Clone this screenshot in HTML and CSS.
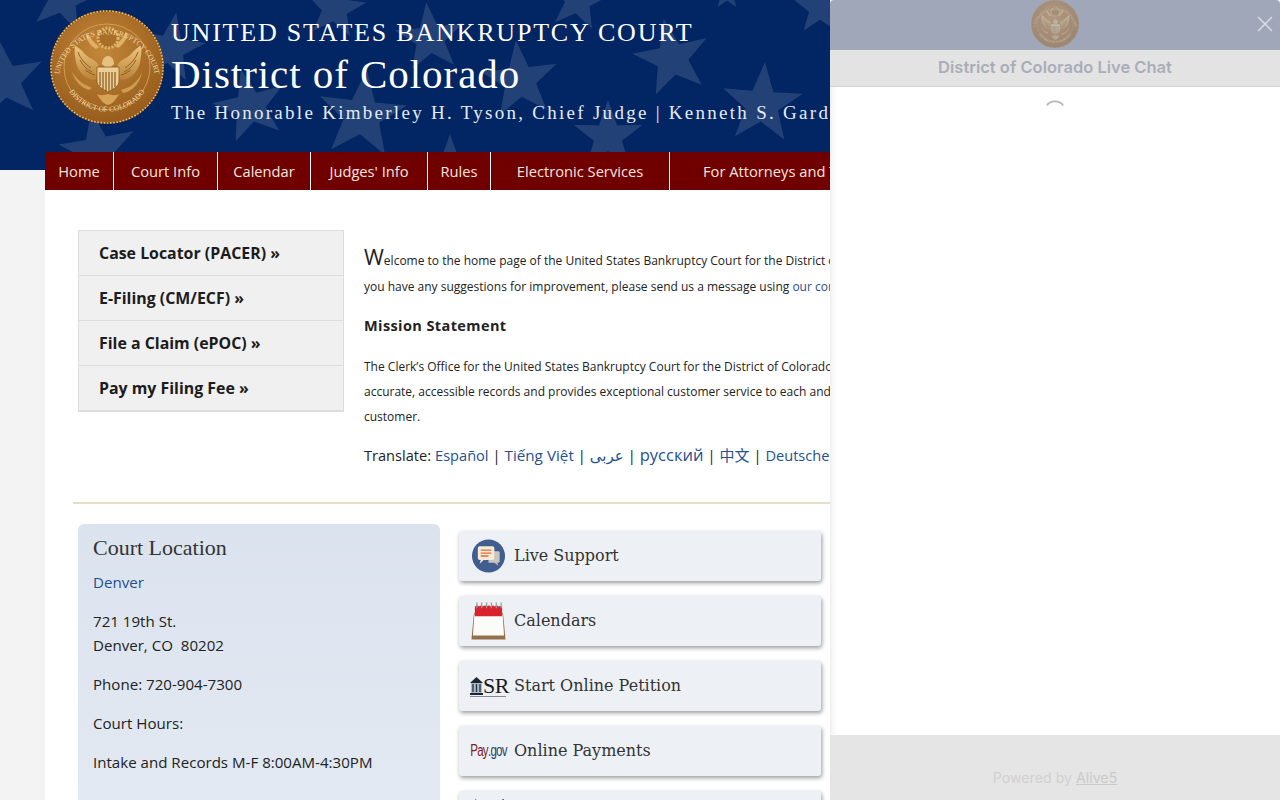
FILE: index.html
```html
<!DOCTYPE html>
<html lang="en">
<head>
    <meta charset="UTF-8">
    <meta name="viewport" content="width=device-width, initial-scale=1.0">
    <title>District of Colorado | United States Bankruptcy Court</title>
    <link rel="stylesheet" href="styles.css">
</head>
<body>

<header class="site-header">
    <svg class="stars" width="1280" height="170" viewBox="0 0 1280 170" aria-hidden="true">
        <defs>
            <polygon id="star" points="0,-1 .25,-.3 .951,-.309 .39,.13 .588,.809 0,.42 -.588,.809 -.39,.13 -.951,-.309 -.25,-.3"/>
        </defs>
        <use href="#star" transform="translate(63,-2) rotate(12) scale(36)"/>
        <use href="#star" transform="translate(4,80) rotate(-8) scale(42)"/>
        <use href="#star" transform="translate(98,150) rotate(-10) scale(40)"/>
        <use href="#star" transform="translate(170,48) rotate(10) scale(36)"/>
        <use href="#star" transform="translate(250,106) rotate(-14) scale(38)"/>
        <use href="#star" transform="translate(335,8) rotate(8) scale(32)"/>
        <use href="#star" transform="translate(362,115) rotate(6) scale(46)"/>
        <use href="#star" transform="translate(430,38) rotate(-6) scale(36)"/>
        <use href="#star" transform="translate(450,160) rotate(0) scale(26)"/>
        <use href="#star" transform="translate(520,80) rotate(-6) scale(40)"/>
        <use href="#star" transform="translate(578,0) rotate(10) scale(32)"/>
        <use href="#star" transform="translate(608,136) rotate(0) scale(36)"/>
        <use href="#star" transform="translate(672,58) rotate(-12) scale(40)"/>
        <use href="#star" transform="translate(762,104) rotate(4) scale(42)"/>
        <use href="#star" transform="translate(727,-6) rotate(0) scale(16)"/>
        <use href="#star" transform="translate(820,8) rotate(0) scale(28)"/>
    </svg>
    <svg class="seal" width="114" height="114" viewBox="0 0 114 114" role="img" aria-label="Court seal">
        <defs>
            <radialGradient id="gold" cx="45%" cy="35%" r="70%">
                <stop offset="0" stop-color="#c4873a"/>
                <stop offset="1" stop-color="#94591a"/>
            </radialGradient>
            <linearGradient id="wing" x1="0" y1="0" x2="0" y2="1">
                <stop offset="0" stop-color="#eec57e"/>
                <stop offset="1" stop-color="#b98338"/>
            </linearGradient>
            <g id="emblem">
                <circle cx="57" cy="57" r="56" fill="url(#gold)" stroke="#7c4c16" stroke-width="1.5"/>
                <circle cx="57" cy="57" r="56" fill="none" stroke="#eec272" stroke-width="1.6" stroke-dasharray="1.6 1.6"/>
                <circle cx="57" cy="57" r="43" fill="none" stroke="#dca855" stroke-width=".8"/>
                <circle cx="58" cy="28" r="10" fill="#a86f28" stroke="#e0b468" stroke-width="3" stroke-dasharray="2 1.4"/>
                <path d="M25 36c4 1 8 6 12 10 4 3 8 4 11 8l2 13c-4 4-9 3-13 1-5-3-10-9-11-16-1-5-2-11-1-16z" fill="url(#wing)"/>
                <path d="M91 36c-4 1-8 6-12 10-4 3-8 4-11 8l-2 13c4 4 9 3 13 1 5-3 10-9 11-16 1-5 2-11 1-16z" fill="url(#wing)"/>
                <path d="M28 42c2 6 7 12 13 16M30 50c3 5 6 9 12 12M35 60c3 2 6 4 10 5M88 42c-2 6-7 12-13 16M86 50c-3 5-6 9-12 12M81 60c-3 2-6 4-10 5" fill="none" stroke="#8a5618" stroke-width=".9"/>
                <path d="M38 24c2 4 6 8 11 13l-3 2c-5-3-9-8-10-13zM76 22c-2 4-6 9-11 14l3 2c5-3 9-9 10-14z" fill="#dfb066"/>
                <path d="M52 54c0-5 3-8 6-8s6 3 6 8l-3 3h-6z" fill="#e8c080"/>
                <path d="M47 57h22v14c0 5-5 8-11 11-6-3-11-6-11-11z" fill="#ecce94" stroke="#7e4f18" stroke-width=".7"/>
                <path d="M50 62v14M53 62v17M56 62v19M59 62v19M62 62v18M65 62v15" stroke="#7e4f18" stroke-width="1.1"/>
                <path d="M47 84c3 6 7 10 11 11 4-1 8-5 11-11-4 2-7 1-11 0-4 1-7 2-11 0z" fill="#d6a355"/>
                <path d="M22 62c3 4 7 10 14 13l6 3-3 2c-7-2-14-8-17-18zM92 62c-2 5-6 11-13 15l-8 3 2 3c9-1 17-10 19-21z" fill="#cf9c50"/>
                <text class="seal-text"><textPath href="#seal-top" startOffset="50%">UNITED STATES BANKRUPTCY COURT</textPath></text>
                <text class="seal-text"><textPath href="#seal-bottom" startOffset="50%">DISTRICT OF COLORADO</textPath></text>
            </g>
            <path id="seal-top" d="M9 66A48.500 48.500 0 0 1 105 66"/>
            <path id="seal-bottom" d="M14 72A46 46 0 0 0 100 72"/>
        </defs>
        <use href="#emblem"/>
    </svg>
    <div class="titles">
        <div class="title-top">UNITED STATES BANKRUPTCY COURT</div>
        <div class="title-main">District of Colorado</div>
        <div class="title-sub">The Honorable Kimberley H. Tyson, Chief Judge | Kenneth S. Gardner, Clerk of Court</div>
    </div>
</header>

<div class="page">
    <nav class="main-nav">
        <a href="#">Home</a>
        <a href="#">Court Info</a>
        <a href="#">Calendar</a>
        <a href="#">Judges' Info</a>
        <a href="#">Rules</a>
        <a href="#">Electronic Services</a>
        <a href="#">For Attorneys and Trustees</a>
    </nav>

    <section class="intro">
        <ul class="quick-links">
            <li><a href="#">Case Locator (PACER) »</a></li>
            <li><a href="#">E-Filing (CM/ECF) »</a></li>
            <li><a href="#">File a Claim (ePOC) »</a></li>
            <li><a href="#">Pay my Filing Fee »</a></li>
        </ul>
        <div class="welcome">
            <p class="lead"><span class="drop">W</span>elcome to the home page of the United States Bankruptcy Court for the District of Colorado. If<br>you have any suggestions for improvement, please send us a message using <a href="#">our contact form</a>.</p>
            <h3>Mission Statement</h3>
            <p class="mission">The Clerk’s Office for the United States Bankruptcy Court for the District of Colorado maintains<br>accurate, accessible records and provides exceptional customer service to each and every<br>customer.</p>
            <p class="translate">Translate: <a href="#">Español</a> | <a href="#" class="lang-vi">Tiếng Việt</a> | <a href="#" class="lang-ar" lang="ar">عربى</a> | <a href="#" class="lang-ru">русский</a> | <a href="#" class="lang-zh" lang="zh">中文</a> | <a href="#">Deutsche</a></p>
        </div>
    </section>

    <hr class="divider">

    <section class="lower">
        <div class="location">
            <h2>Court Location</h2>
            <p class="city"><a href="#">Denver</a></p>
            <p>721 19th St.<br>Denver, CO&nbsp; 80202</p>
            <p>Phone: 720-904-7300</p>
            <p>Court Hours:</p>
            <p>Intake and Records M-F 8:00AM-4:30PM</p>
        </div>
        <div class="tiles">
            <a href="#" class="tile">
                <span class="tile-icon">
                    <svg width="36" height="36" viewBox="0 0 36 36" aria-hidden="true">
                        <circle cx="18" cy="18" r="17" fill="#3f5d8e"/>
                        <path d="M18 13h10a1.500 1.500 0 0 1 1.500 1.500v9a1.500 1.500 0 0 1-1.500 1.500h-1l1 3-4-3h-6z" fill="#c9c4bc"/>
                        <path d="M9 8h13a2 2 0 0 1 2 2v10a2 2 0 0 1-2 2h-9l-4 4 1-4H9a2 2 0 0 1-2-2V10a2 2 0 0 1 2-2z" fill="#f6ead9"/>
                        <path d="M10 12h11M10 15h11M10 18h8" stroke="#e0703a" stroke-width="1.400"/>
                    </svg>
                </span>
                <span>Live Support</span>
            </a>
            <a href="#" class="tile">
                <span class="tile-icon">
                    <svg width="36" height="40" viewBox="0 0 36 40" aria-hidden="true">
                        <path d="M3 12h30l2.500 27H.500z" fill="#94704a"/>
                        <path d="M3.500 13h29l1.500 22H2z" fill="#fbfbf8"/>
                        <path d="M4 5q3-2 4 0 3-2 4 0 3-2 4 0 3-2 4 0 3-2 4 0 3-2 4 0 2-1 4 0v10H4z" fill="#d8222c"/>
                        <path d="M6 1v6M11 1v6M16 1v6M21 1v6M26 1v6M31 1v6" stroke="#9a9a9a" stroke-width="1.300"/>
                    </svg>
                </span>
                <span>Calendars</span>
            </a>
            <a href="#" class="tile">
                <span class="tile-icon sr-icon">
                    <svg width="13" height="19" viewBox="0 0 13 19" aria-hidden="true">
                        <path d="M6.500 0l6.500 6H0z" fill="#1c2530"/>
                        <rect x="1" y="6" width="11" height="10" fill="#a9bccb"/>
                        <path d="M3 7v8M6.500 7v8M10 7v8" stroke="#26323c" stroke-width="1.300"/>
                        <rect y="16" width="13" height="2" fill="#1c2530"/>
                    </svg>
                    <span class="sr-text">SR</span>
                </span>
                <span>Start Online Petition</span>
            </a>
            <a href="#" class="tile">
                <span class="tile-icon pay-icon"><span class="pay">Pay</span><span class="gov">.gov</span></span>
                <span>Online Payments</span>
            </a>
            <a href="#" class="tile tile-cut">
                <span class="tile-icon">
                    <svg width="36" height="6" viewBox="0 0 36 6" aria-hidden="true">
                        <path d="M3 6l2-4 2 4M32 6l1-5 1 5" fill="none" stroke="#444" stroke-width="1.200"/>
                    </svg>
                </span>
            </a>
        </div>
    </section>
</div>

<aside class="chat">
    <div class="chat-top">
        <svg class="chat-seal" width="48" height="48" viewBox="0 0 114 114" aria-hidden="true">
            <use href="#emblem"/>
        </svg>
        <svg class="chat-close" width="16" height="16" viewBox="0 0 16 16" aria-hidden="true">
            <path d="M1 1l14 14M15 1L1 15" stroke="#dfe2ea" stroke-width="1.200" fill="none"/>
        </svg>
    </div>
    <div class="chat-title">District of Colorado Live Chat</div>
    <div class="chat-body">
        <svg width="20" height="8" viewBox="0 0 20 8" aria-hidden="true">
            <path d="M2 6.500C5 1 15 1 18 6.500" stroke="#b3b6bf" stroke-width="1.800" fill="none"/>
        </svg>
    </div>
    <div class="chat-foot">Powered by <a href="#">Alive5</a></div>
</aside>

</body>
</html>
```

FILE: styles.css
```css
* {
    margin: 0;
    padding: 0;
    box-sizing: border-box;
}

html, body {
    height: 800px;
    overflow: hidden;
}

body {
    background-color: #f3f3f3;
    font-family: "Open Sans", sans-serif;
    color: #222;
}

a {
    color: #25508f;
    text-decoration: none;
}

.site-header {
    position: relative;
    display: flex;
    gap: 7px;
    height: 170px;
    padding: 10px 0 0 50px;
    background-color: #022563;
    overflow: hidden;
}

.stars {
    position: absolute;
    top: 0;
    left: 0;
    fill: #224277;
}

.seal {
    position: relative;
    flex: none;
}

.seal-text {
    font-family: "Liberation Serif", serif;
    font-size: 7.5px;
    fill: #f2d9a8;
    text-anchor: middle;
}

.titles {
    position: relative;
    font-family: "Liberation Serif", serif;
    color: #fff;
    white-space: nowrap;
}

.title-top {
    margin-top: 6px;
    font-size: 26px;
    line-height: 34px;
    letter-spacing: 1.8px;
}

.title-main {
    font-size: 41px;
    line-height: 48px;
    letter-spacing: .95px;
}

.title-sub {
    font-size: 19px;
    line-height: 28px;
    letter-spacing: 2.28px;
    margin-top: 1px;
    color: #e6ebf2;
}

.page {
    position: relative;
    margin: -18px 45px 0;
    padding-bottom: 40px;
    background-color: #fff;
    min-height: 700px;
}

.main-nav {
    display: grid;
    grid-template-columns: 69px 104px 93px 117px 63px 179px 1fr;
    height: 38px;
    background-color: #700000;
}

.main-nav a {
    color: #f4e6dc;
    font-size: 14.7px;
    line-height: 38px;
    text-align: center;
    border-right: 1px solid #fff;
    white-space: nowrap;
}

.main-nav a:last-child {
    border-right: none;
    text-align: left;
    padding-left: 33px;
}

.intro {
    display: flex;
    gap: 20px;
    padding: 40px 0 0 33px;
}

.quick-links {
    flex: none;
    align-self: flex-start;
    width: 266px;
    list-style: none;
    background-color: #f0f0f0;
    border: 1px solid #ddd;
    border-bottom-width: 2px;
}

.quick-links li {
    height: 45px;
    border-bottom: 1px solid #ddd;
}

.quick-links li:last-child {
    height: 44px;
    border-bottom: none;
}

.quick-links a {
    display: block;
    padding-left: 20px;
    line-height: 44px;
    font-size: 15.9px;
    font-weight: 700;
    color: #1c1c1c;
}

.welcome {
    white-space: nowrap;
    font-size: 12px;
}

.lead {
    line-height: 26px;
    margin-top: 17px;
}

.drop {
    font-size: 21.5px;
    line-height: 20px;
}

.welcome h3 {
    font-size: 14.5px;
    line-height: 20px;
    margin-top: 16px;
    letter-spacing: .4px;
}

.mission {
    line-height: 25px;
    margin-top: 18px;
}

.translate {
    font-size: 14.6px;
    line-height: 24px;
    margin-top: 14px;
    word-spacing: .2px;
}

.lang-vi {
    font-size: 15.2px;
}

.lang-ar {
    font-family: "DejaVu Sans", sans-serif;
    font-size: 15px;
}

.lang-ru {
    font-size: 16.5px;
}

.lang-zh {
    font-family: "Noto Sans CJK SC", sans-serif;
    font-size: 15px;
}

.divider {
    margin: 34px 0 20px 28px;
    border: none;
    border-top: 2px solid #e6dfc8;
}

.lower {
    display: flex;
    align-items: flex-start;
    gap: 19px;
    padding-left: 33px;
}

.location {
    flex: none;
    width: 362px;
    height: 420px;
    padding: 10px 15px;
    border-radius: 6px;
    background: linear-gradient(#dbe3ee, #e6ecf5);
    font-size: 15.1px;
    line-height: 24px;
}

.location h2 {
    font-family: "Liberation Serif", serif;
    font-size: 22px;
    font-weight: 400;
    line-height: 28px;
    margin-bottom: 8px;
    color: #333;
}

.location p {
    margin-bottom: 15px;
}

.tiles {
    display: flex;
    flex-direction: column;
    gap: 15px;
    width: 362px;
    margin-top: 7px;
}

.tile {
    display: flex;
    align-items: center;
    gap: 8px;
    height: 50px;
    padding: 0 0 2px 12px;
    border-radius: 3px;
    background-color: #edf1f6;
    box-shadow: 1px 2px 4px rgba(0, 0, 0, 0.4);
    font-family: "DejaVu Serif", serif;
    font-size: 16px;
    color: #333;
}

.tile-cut {
    align-items: flex-start;
    padding-top: 5px;
}

.tile-icon {
    display: flex;
    align-items: center;
    justify-content: center;
    flex: none;
    width: 35px;
    margin-top: 2px;
}

.sr-icon {
    justify-content: flex-start;
    margin-left: -1px;
    width: 36px;
    background: linear-gradient(#8a8a8a, #8a8a8a) left bottom / 39px 1px no-repeat;
}

.sr-icon svg {
    flex: none;
}

.sr-text {
    flex: none;
    font-family: "Liberation Serif", serif;
    font-size: 22px;
    line-height: 22px;
    letter-spacing: -.5px;
    color: #1a1a1a;
}

.pay-icon {
    font-family: "Liberation Sans", sans-serif;
    font-size: 16px;
    letter-spacing: -1px;
    transform: scaleX(.72);
}

.pay {
    color: #7b1a22;
}

.gov {
    color: #1f3f6e;
}

.chat {
    position: fixed;
    top: 0;
    right: 0;
    display: flex;
    flex-direction: column;
    width: 450px;
    height: 800px;
    background-color: #fff;
    text-align: center;
}

.chat-top {
    position: relative;
    flex: none;
    height: 50px;
    background-color: #a0a7b9;
    border-radius: 4px 4px 0 0;
}

.chat-seal {
    opacity: 0.45;
}

.chat-close {
    position: absolute;
    top: 16px;
    right: 7px;
}

.chat-title {
    flex: none;
    height: 37px;
    border-bottom: 1px solid #d2d2d2;
    background-color: #e3e3e3;
    font-family: Inter, sans-serif;
    font-size: 16.5px;
    font-weight: 600;
    line-height: 35px;
    color: #aaadb9;
}

.chat-body {
    flex: 1;
    padding-top: 3px;
    box-shadow: inset 8px 0 8px -8px rgba(0, 0, 0, 0.12);
}

.chat-foot {
    flex: none;
    height: 65px;
    padding-top: 34px;
    background-color: #e5e5e5;
    font-family: Inter, sans-serif;
    font-size: 14.2px;
    color: #d1d1d1;
}

.chat-foot a {
    color: #cacaca;
    text-decoration: underline;
}
```
